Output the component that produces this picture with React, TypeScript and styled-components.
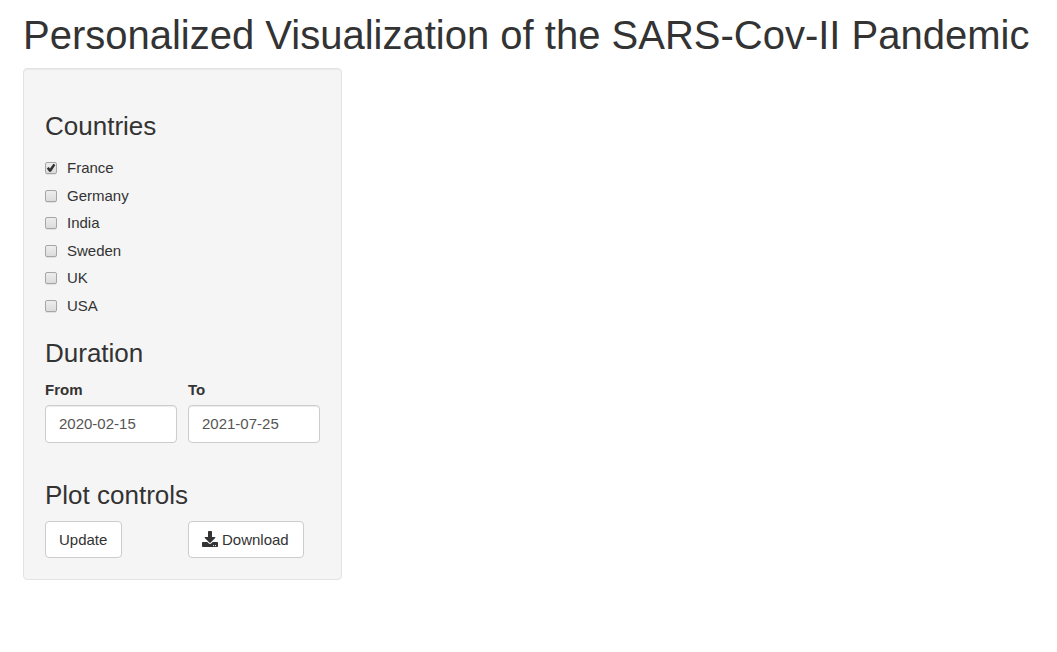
import React, { useState } from 'react';
import styled, { createGlobalStyle } from 'styled-components';
import { FaDownload } from 'react-icons/fa';

const GlobalStyle = createGlobalStyle`
  *, *::before, *::after { box-sizing: border-box; }
  body {
    margin: 0;
    background: #fff;
    color: #333;
    font-family: "Liberation Sans", Arial, sans-serif;
    font-size: 15px;
    line-height: 22px;
  }
`;

const Page = styled.div`
  padding: 13px 17px 22px 23px;
`;

const Title = styled.h1`
  margin: 0 0 11px;
  font-size: 40px;
  font-weight: 400;
  line-height: 44px;
`;

const Columns = styled.div`
  display: grid;
  grid-template-columns: minmax(0, 1fr) minmax(0, 2fr);
  gap: 60px;
  align-items: start;
`;

const Panel = styled.form`
  padding: 21px;
  border: 1px solid #e3e3e3;
  border-radius: 4px;
  background: #f5f5f5;
  box-shadow: inset 0 1px 1px rgba(0, 0, 0, 0.05);
`;

const Section = styled.section`
  margin-top: 22px;

  & + & { margin-top: 38px; }
`;

const CountrySection = styled(Section)`
  & + ${Section} { margin-top: 22px; }
`;

const Heading = styled.h3<{ $space?: number }>`
  margin: 0 0 ${(p) => p.$space ?? 11}px;
  font-size: 26px;
  font-weight: 400;
  line-height: 29px;
`;

const OptionList = styled.div`
  display: flex;
  flex-direction: column;
  justify-content: space-between;
  min-height: 160px;
`;

const Option = styled.label`
  display: flex;
  align-items: center;
  gap: 10px;
  cursor: pointer;
`;

const Tick = styled.svg`
  grid-area: 1 / 1;
  width: 12px;
  height: 12px;
  pointer-events: none;
  visibility: hidden;
`;

const CheckInput = styled.input`
  grid-area: 1 / 1;
  appearance: none;
  width: 12px;
  height: 12px;
  margin: 0;
  border: 1px solid #a6a6a6;
  border-radius: 2px;
  background: linear-gradient(#ededed, #dcdcdc);
  box-shadow: 0 1px 0 rgba(0, 0, 0, 0.08);

  &:checked + ${Tick} { visibility: visible; }
`;

const CheckBox = styled.span`
  display: grid;
`;

const Pair = styled.div`
  display: grid;
  grid-template-columns: 1fr 1fr;
  gap: 11px;
  justify-items: start;
`;

const Field = styled.label`
  display: grid;
  gap: 4px;
  width: 100%;
  font-weight: 700;
`;

const DateInput = styled.input`
  width: 100%;
  height: 38px;
  padding: 0 13px 2px;
  border: 1px solid #ccc;
  border-radius: 4px;
  background: #fff;
  box-shadow: inset 0 1px 1px rgba(0, 0, 0, 0.075);
  color: #555;
  font: inherit;
  font-weight: 400;
`;

const Button = styled.button`
  display: inline-flex;
  align-items: center;
  gap: 4px;
  height: 37px;
  padding: 0 14px 0 13px;
  border: 1px solid #ccc;
  border-radius: 4px;
  background: #fff;
  color: #333;
  font: inherit;
  cursor: pointer;
`;

const DownloadIcon = styled(FaDownload)`
  width: 16px;
  height: 16px;
  margin-bottom: 1px;
`;

const countries = ['France', 'Germany', 'India', 'Sweden', 'UK', 'USA'];

export default function App() {
  const [from, setFrom] = useState('2020-02-15');
  const [to, setTo] = useState('2021-07-25');

  return (
    <>
      <GlobalStyle />
      <Page>
        <Title>Personalized Visualization of the SARS-Cov-II Pandemic</Title>
        <Columns>
          <Panel onSubmit={(e) => e.preventDefault()}>
            <CountrySection>
              <Heading $space={16}>Countries</Heading>
              <OptionList>
                {countries.map((name) => (
                  <Option key={name}>
                    <CheckBox>
                      <CheckInput type="checkbox" defaultChecked={name === 'France'} />
                      <Tick viewBox="0 0 12 12" aria-hidden="true">
                        <path d="M1.8 6.4 L3.6 4.9 L5 6.4 L8.4 1.8 L10.4 3 L6 9.8 L4.2 9.8 Z" fill="#333" />
                      </Tick>
                    </CheckBox>
                    {name}
                  </Option>
                ))}
              </OptionList>
            </CountrySection>
            <Section>
              <Heading>Duration</Heading>
              <Pair>
                <Field>
                  From
                  <DateInput type="text" value={from} onChange={(e) => setFrom(e.target.value)} />
                </Field>
                <Field>
                  To
                  <DateInput type="text" value={to} onChange={(e) => setTo(e.target.value)} />
                </Field>
              </Pair>
            </Section>
            <Section>
              <Heading>Plot controls</Heading>
              <Pair>
                <Button type="submit">Update</Button>
                <Button type="button">
                  <DownloadIcon aria-hidden="true" />
                  Download
                </Button>
              </Pair>
            </Section>
          </Panel>
        </Columns>
      </Page>
    </>
  );
}
